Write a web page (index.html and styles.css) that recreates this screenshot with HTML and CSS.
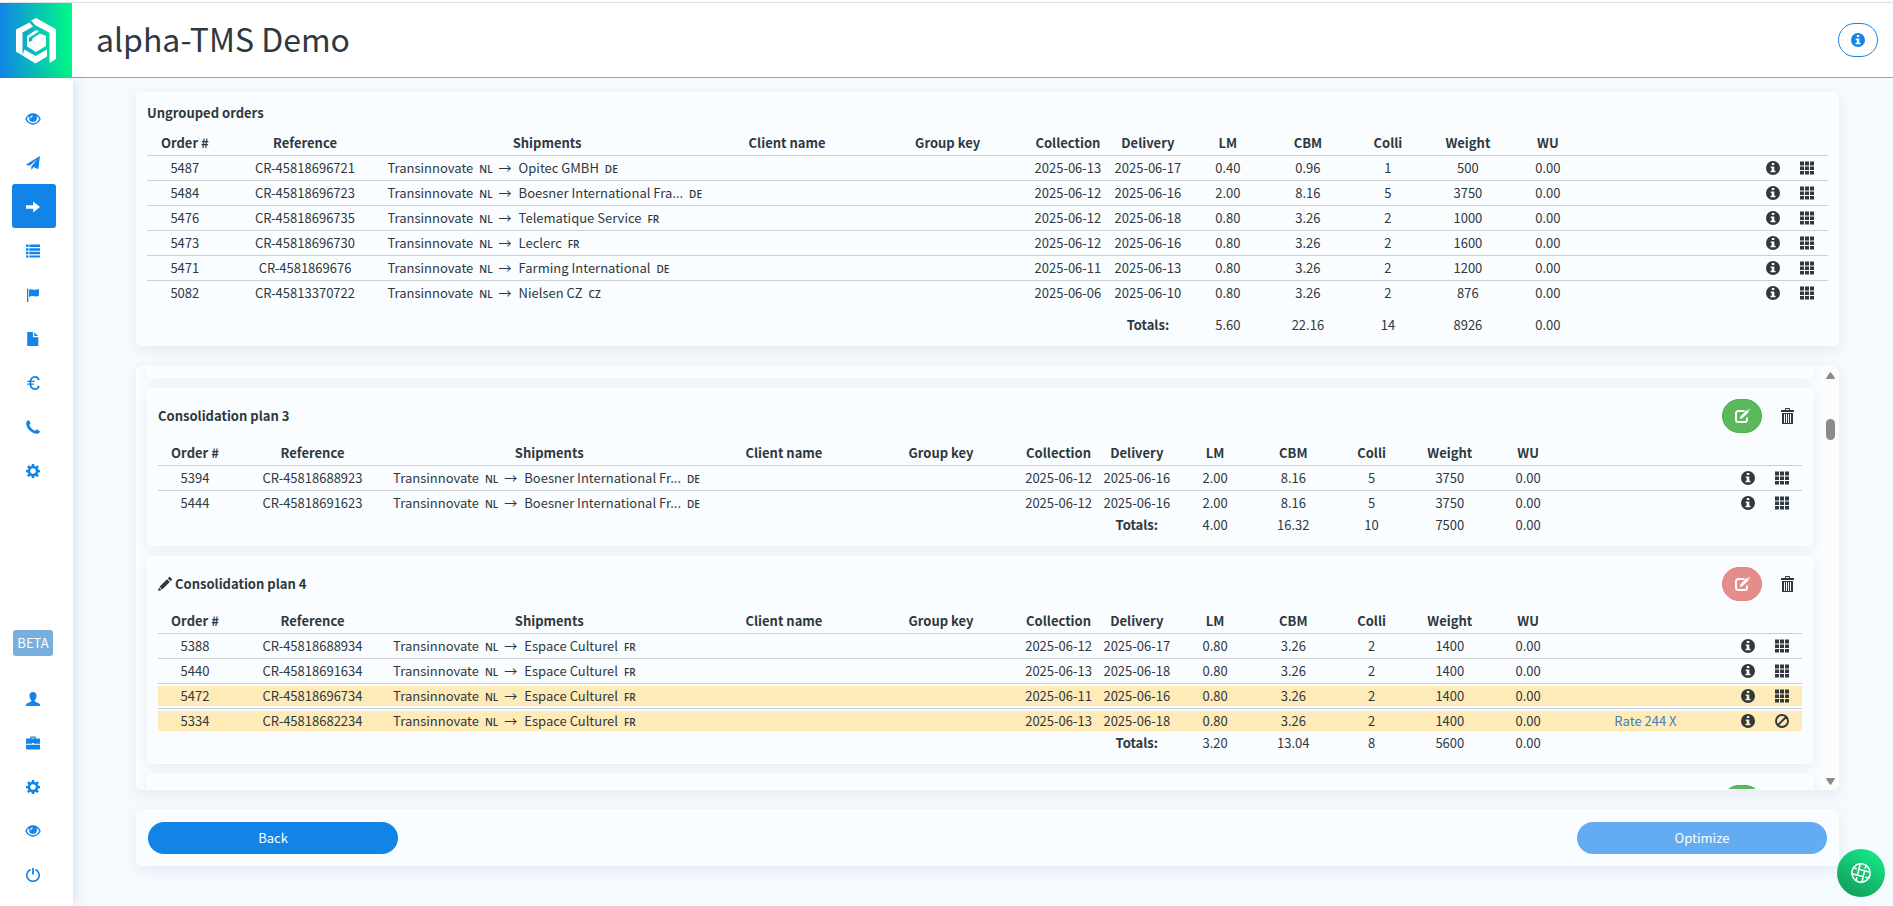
FILE: index.html
```html
<!DOCTYPE html>
<html lang="en">
<head>
<meta charset="utf-8">
<title>alpha-TMS Demo</title>
<link rel="stylesheet" href="styles.css">
</head>
<body>
<svg class="sprite" aria-hidden="true">
  <symbol id="eye" viewBox="0 0 16 14"><path fill="none" stroke="currentColor" stroke-width="1.500" d="M1 7C3 3.300 5.200 2 8 2s5 1.300 7 5c-2 3.700-4.200 5-7 5S3 10.700 1 7z"/><path fill-rule="evenodd" d="M8 2a3.900 3.900 0 1 0 0 7.800A3.900 3.900 0 0 0 8 2zM6.800 3.600c.9-.3 1 .3.800.8-.9.300-1.300 1-1.300 1.900-.6.300-1-.1-.9-.7.200-.9.700-1.600 1.400-2z"/></symbol>
  <symbol id="send" viewBox="0 0 14 14"><path d="M14 0L0 8.500l3.600 1.200L11.500 3 5.300 10.400V14l2.200-3 4.800 2.200z"/></symbol>
  <symbol id="arrow" viewBox="0 0 14 14"><path d="M0 5.200h7.200V1.400L14 7l-6.800 5.600V8.800H0z"/></symbol>
  <symbol id="list" viewBox="0 0 14 14"><path d="M0 .5h2.500v2.600H0zM3.300.5H14v2.600H3.300zM0 4.200h2.500v2.500H0zM3.300 4.200H14v2.500H3.300zM0 7.800h2.500v2.500H0zM3.300 7.800H14v2.500H3.300zM0 11.400h2.500v2.100H0zM3.300 11.400H14v2.100H3.300z"/></symbol>
  <symbol id="flag" viewBox="0 0 14 14"><path d="M1 .5h1.300V14H1zM3 2C5-.3 7 3.200 13 1v6.500C9.500 10 6.500 6.500 3 9z"/></symbol>
  <symbol id="file" viewBox="0 0 14 14"><path d="M1.200 0H7v5.300h5.300V14H1.200zM8.300.2l3.800 3.900H8.300z"/></symbol>
  <symbol id="euro" viewBox="0 0 14 14"><path fill="none" stroke="currentColor" stroke-width="1.800" d="M12.800 4.200C12.500 2 11 .9 9 .9 5.900.9 4.300 3.300 4.300 7s1.600 6.100 4.700 6.100c2 0 3.500-1.100 3.800-3.300"/><path d="M1.500 4.800H9L8.600 6H1zM1.500 7.500h6.800l-.4 1.200H1z"/></symbol>
  <symbol id="phone" viewBox="0 0 14 14"><path d="M.3 2.300L1.700.5c.4-.5 1-.5 1.400 0l1.300 2.400c.2.400.1.700-.2 1l-.9 1c.8 2.200 3.600 5 5.800 5.900l.9-1c.3-.3.6-.4 1-.2l2.500 1.400c.6.300.6.900.1 1.400L12 13.700C6.500 14.500-.8 7.800.3 2.300z"/></symbol>
  <symbol id="cog" viewBox="0 0 14 14"><path fill-rule="evenodd" d="M5.900 0h2.200l.4 2 1.200.5 1.700-1.200 1.500 1.500-1.200 1.700.5 1.200 1.800.3v2.200l-1.900.3-.5 1.200 1.200 1.700-1.500 1.500-1.700-1.200-1.100.5-.4 1.800H5.900l-.4-1.800-1.200-.5-1.700 1.200-1.500-1.500 1.200-1.700-.5-1.200L0 8.200V6l1.900-.3.5-1.200-1.200-1.700 1.500-1.500 1.700 1.200L5.500 2zM7 4.200a2.800 2.800 0 1 0 0 5.600 2.800 2.800 0 0 0 0-5.600z"/></symbol>
  <symbol id="user" viewBox="0 0 14 14"><path d="M7 0C4.800 0 3.500 1.300 3.500 3.500c0 2 .8 3.600 1.700 4.700.3.800-.1 1.400-1 1.800L.8 11.500c-.5.300-.8.900-.8 2.500h14c0-1.600-.3-2.200-.8-2.500L9.800 10c-.9-.4-1.300-1-1-1.800.9-1.100 1.700-2.700 1.700-4.700C10.500 1.300 9.200 0 7 0z"/></symbol>
  <symbol id="briefcase" viewBox="0 0 14 14"><path fill-rule="evenodd" d="M5 .5h4c.6 0 .9.400.9.900v1.100h3.300c.5 0 .8.300.8.800v4.400H8V7H6v.7H0V3.300c0-.5.300-.8.800-.8h3.300V1.400c0-.5.300-.9.900-.9zm.2 1.200v.8h3.600v-.8zM0 8.700h14v3.900c0 .6-.3.900-.8.900H.8c-.5 0-.8-.3-.8-.9z"/></symbol>
  <symbol id="power" viewBox="0 0 14 14"><path fill="none" stroke="currentColor" stroke-width="1.600" d="M4.600 1.500a6.200 6.200 0 1 0 4.800 0"/><path d="M6.100 0h1.800v6.500H6.100z"/></symbol>
  <symbol id="info" viewBox="0 0 14 14"><path fill-rule="evenodd" d="M7 0a7 7 0 1 0 0 14A7 7 0 0 0 7 0zM5.800 2h2.500v2H5.800zM4.700 5.400h3.600v4.300h1.200v1.500h-5V9.700h1.200V6.900h-1z"/></symbol>
  <symbol id="grid" viewBox="0 0 14 14"><path d="M0 .5h4v4H0zM5 .5h4v4H5zM10 .5h4v4h-4zM0 5.500h4v3.500H0zM5 5.500h4v3.500H5zM10 5.500h4v3.500h-4zM0 10h4v3.500H0zM5 10h4v3.500H5zM10 10h4v3.500h-4z"/></symbol>
  <symbol id="ban" viewBox="0 0 14 14"><path fill="none" stroke="currentColor" stroke-width="1.900" d="M7 1a6 6 0 1 0 0 12A6 6 0 0 0 7 1zM3 11l8-8"/></symbol>
  <symbol id="trash" viewBox="0 0 14 16"><path fill-rule="evenodd" d="M4 2V1c0-.6.400-1 1-1h3c.6 0 1 .4 1 1v1h3.500c.3 0 .5.200.5.500V4H0V2.500c0-.3.200-.5.500-.5zM5 1v1h3V1zM1 5h11v10.500c0 .3-.2.500-.5.500h-10c-.3 0-.5-.2-.5-.5zM3 6v9h1V6zM5 6v9h1V6zM7 6v9h1V6zM9 6v9h1V6z"/></symbol>
  <symbol id="edit" viewBox="0 0 16 14"><path fill="none" stroke="currentColor" stroke-width="2" d="M10.500 2H4.500C3 2 2 3 2 4.500v6C2 12 3 13 4.500 13h6c1.500 0 2.500-1 2.500-2.500V8.500"/><path d="M13 0.800l2 1.900-6.300 6.300-3 1.200 1-3.200zM14.200 0H16v1.800z"/></symbol>
  <symbol id="pencil" viewBox="0 0 14 14"><path d="M9 2.200L11.800 5 4.200 12.500 1.500 9.800zM9.800 1.400L11 .2c.4-.3.900-.3 1.200 0l1.600 1.600c.3.300.3.800 0 1.200l-1.200 1.200zM.9 10.500l2.600 2.600L0 14z"/></symbol>
</svg>

<header class="topbar">
  <a class="logo" href="#" aria-label="Home">
    <svg width="40" height="46" viewBox="0 0 40 46" fill="#fff"><path d="M0 11.500L13.500 4.500 17 8.500 6.500 14.500V36.800L0 33.800z"/><path d="M15 2.500L20 0l20 11.200V41l-6.500 4V14.800L19 7z"/><path d="M0 33.500l6.500 3.300L8.500 31.500l11 6.500L31 31.500v7L19.500 45.500z"/><path d="M11 18l9-6 3 1.500-10 6.300V24l3.500-1.500v-2.200l7.500-4.800 6 2.500v10L20 34l-9-5.500z"/></svg>
  </a>
  <h1 class="topbar-title">alpha-TMS Demo</h1>
  <button class="pill pill-outline" type="button" aria-label="Information"><svg class="ico"><use href="#info"/></svg></button>
</header>

<div class="shell">
  <nav class="sidebar" aria-label="Main">
    <div class="nav-group">
      <a class="nav-link" href="#" aria-label="Overview"><svg class="ico ico-wide"><use href="#eye"/></svg></a>
      <a class="nav-link" href="#" aria-label="Send"><svg class="ico"><use href="#send"/></svg></a>
      <a class="nav-link active" href="#" aria-label="Planning"><svg class="ico"><use href="#arrow"/></svg></a>
      <a class="nav-link" href="#" aria-label="Lists"><svg class="ico"><use href="#list"/></svg></a>
      <a class="nav-link" href="#" aria-label="Flags"><svg class="ico"><use href="#flag"/></svg></a>
      <a class="nav-link" href="#" aria-label="Documents"><svg class="ico"><use href="#file"/></svg></a>
      <a class="nav-link" href="#" aria-label="Finance"><svg class="ico"><use href="#euro"/></svg></a>
      <a class="nav-link" href="#" aria-label="Contact"><svg class="ico"><use href="#phone"/></svg></a>
      <a class="nav-link" href="#" aria-label="Settings"><svg class="ico"><use href="#cog"/></svg></a>
    </div>
    <div class="nav-group">
      <span class="beta">BETA</span>
      <a class="nav-link" href="#" aria-label="Profile"><svg class="ico"><use href="#user"/></svg></a>
      <a class="nav-link" href="#" aria-label="Company"><svg class="ico"><use href="#briefcase"/></svg></a>
      <a class="nav-link" href="#" aria-label="Preferences"><svg class="ico"><use href="#cog"/></svg></a>
      <a class="nav-link" href="#" aria-label="View"><svg class="ico ico-wide"><use href="#eye"/></svg></a>
      <a class="nav-link" href="#" aria-label="Log out"><svg class="ico"><use href="#power"/></svg></a>
    </div>
  </nav>

  <main class="content">
    <section class="card">
      <h2 class="card-title">Ungrouped orders</h2>
      <table class="orders spaced">
        <colgroup><col class="c-order"><col class="c-ref"><col class="c-ship"><col class="c-client"><col class="c-group"><col class="c1"><col class="c1"><col class="c1"><col class="c1"><col class="c1"><col class="c1"><col class="c1"><col class="c-rate"><col class="c1"></colgroup>
        <thead><tr><th>Order #</th><th>Reference</th><th>Shipments</th><th>Client name</th><th>Group key</th><th>Collection</th><th>Delivery</th><th>LM</th><th>CBM</th><th>Colli</th><th>Weight</th><th>WU</th><td></td><td></td></tr></thead>
        <tbody>
          <tr><td>5487</td><td>CR-45818696721</td><td class="ship">Transinnovate<small>NL</small>→<span class="dest">Opitec GMBH</span><small>DE</small></td><td></td><td></td><td>2025-06-13</td><td>2025-06-17</td><td>0.40</td><td>0.96</td><td>1</td><td>500</td><td>0.00</td><td></td><td><div class="acts"><button type="button" aria-label="Info"><svg class="ico"><use href="#info"/></svg></button><button type="button" aria-label="Move"><svg class="ico"><use href="#grid"/></svg></button></div></td></tr>
          <tr><td>5484</td><td>CR-45818696723</td><td class="ship">Transinnovate<small>NL</small>→<span class="dest">Boesner International Fra...</span><small>DE</small></td><td></td><td></td><td>2025-06-12</td><td>2025-06-16</td><td>2.00</td><td>8.16</td><td>5</td><td>3750</td><td>0.00</td><td></td><td><div class="acts"><button type="button" aria-label="Info"><svg class="ico"><use href="#info"/></svg></button><button type="button" aria-label="Move"><svg class="ico"><use href="#grid"/></svg></button></div></td></tr>
          <tr><td>5476</td><td>CR-45818696735</td><td class="ship">Transinnovate<small>NL</small>→<span class="dest">Telematique Service</span><small>FR</small></td><td></td><td></td><td>2025-06-12</td><td>2025-06-18</td><td>0.80</td><td>3.26</td><td>2</td><td>1000</td><td>0.00</td><td></td><td><div class="acts"><button type="button" aria-label="Info"><svg class="ico"><use href="#info"/></svg></button><button type="button" aria-label="Move"><svg class="ico"><use href="#grid"/></svg></button></div></td></tr>
          <tr><td>5473</td><td>CR-45818696730</td><td class="ship">Transinnovate<small>NL</small>→<span class="dest">Leclerc</span><small>FR</small></td><td></td><td></td><td>2025-06-12</td><td>2025-06-16</td><td>0.80</td><td>3.26</td><td>2</td><td>1600</td><td>0.00</td><td></td><td><div class="acts"><button type="button" aria-label="Info"><svg class="ico"><use href="#info"/></svg></button><button type="button" aria-label="Move"><svg class="ico"><use href="#grid"/></svg></button></div></td></tr>
          <tr><td>5471</td><td>CR-4581869676</td><td class="ship">Transinnovate<small>NL</small>→<span class="dest">Farming International</span><small>DE</small></td><td></td><td></td><td>2025-06-11</td><td>2025-06-13</td><td>0.80</td><td>3.26</td><td>2</td><td>1200</td><td>0.00</td><td></td><td><div class="acts"><button type="button" aria-label="Info"><svg class="ico"><use href="#info"/></svg></button><button type="button" aria-label="Move"><svg class="ico"><use href="#grid"/></svg></button></div></td></tr>
          <tr><td>5082</td><td>CR-45813370722</td><td class="ship">Transinnovate<small>NL</small>→<span class="dest">Nielsen CZ</span><small>CZ</small></td><td></td><td></td><td>2025-06-06</td><td>2025-06-10</td><td>0.80</td><td>3.26</td><td>2</td><td>876</td><td>0.00</td><td></td><td><div class="acts"><button type="button" aria-label="Info"><svg class="ico"><use href="#info"/></svg></button><button type="button" aria-label="Move"><svg class="ico"><use href="#grid"/></svg></button></div></td></tr>
        </tbody>
        <tfoot><tr><td colspan="6"></td><th>Totals:</th><td>5.60</td><td>22.16</td><td>14</td><td>8926</td><td>0.00</td><td></td><td></td></tr></tfoot>
      </table>
    </section>

    <section class="plans">
      <div class="plan-list">
        <div class="card card-tail"></div>
        <article class="card">
          <div class="plan-head">
            <h2 class="card-title">Consolidation plan 3</h2>
            <button class="pill pill-green" type="button" aria-label="Edit plan 3"><svg class="ico ico-wide"><use href="#edit"/></svg></button>
            <button class="trash" type="button" aria-label="Delete plan 3"><svg class="ico ico-tall"><use href="#trash"/></svg></button>
          </div>
          <table class="orders">
            <colgroup><col class="c-order"><col class="c-ref"><col class="c-ship"><col class="c-client"><col class="c-group"><col class="c1"><col class="c1"><col class="c1"><col class="c1"><col class="c1"><col class="c1"><col class="c1"><col class="c-rate"><col class="c1"></colgroup>
            <thead><tr><th>Order #</th><th>Reference</th><th>Shipments</th><th>Client name</th><th>Group key</th><th>Collection</th><th>Delivery</th><th>LM</th><th>CBM</th><th>Colli</th><th>Weight</th><th>WU</th><td></td><td></td></tr></thead>
            <tbody>
              <tr><td>5394</td><td>CR-45818688923</td><td class="ship">Transinnovate<small>NL</small>→<span class="dest">Boesner International Fr...</span><small>DE</small></td><td></td><td></td><td>2025-06-12</td><td>2025-06-16</td><td>2.00</td><td>8.16</td><td>5</td><td>3750</td><td>0.00</td><td></td><td><div class="acts"><button type="button" aria-label="Info"><svg class="ico"><use href="#info"/></svg></button><button type="button" aria-label="Move"><svg class="ico"><use href="#grid"/></svg></button></div></td></tr>
              <tr><td>5444</td><td>CR-45818691623</td><td class="ship">Transinnovate<small>NL</small>→<span class="dest">Boesner International Fr...</span><small>DE</small></td><td></td><td></td><td>2025-06-12</td><td>2025-06-16</td><td>2.00</td><td>8.16</td><td>5</td><td>3750</td><td>0.00</td><td></td><td><div class="acts"><button type="button" aria-label="Info"><svg class="ico"><use href="#info"/></svg></button><button type="button" aria-label="Move"><svg class="ico"><use href="#grid"/></svg></button></div></td></tr>
            </tbody>
            <tfoot><tr><td colspan="6"></td><th>Totals:</th><td>4.00</td><td>16.32</td><td>10</td><td>7500</td><td>0.00</td><td></td><td></td></tr></tfoot>
          </table>
        </article>
        <article class="card">
          <div class="plan-head">
            <h2 class="card-title"><svg class="ico" aria-hidden="true"><use href="#pencil"/></svg>Consolidation plan 4</h2>
            <button class="pill pill-red" type="button" aria-label="Edit plan 4"><svg class="ico ico-wide"><use href="#edit"/></svg></button>
            <button class="trash" type="button" aria-label="Delete plan 4"><svg class="ico ico-tall"><use href="#trash"/></svg></button>
          </div>
          <table class="orders">
            <colgroup><col class="c-order"><col class="c-ref"><col class="c-ship"><col class="c-client"><col class="c-group"><col class="c1"><col class="c1"><col class="c1"><col class="c1"><col class="c1"><col class="c1"><col class="c1"><col class="c-rate"><col class="c1"></colgroup>
            <thead><tr><th>Order #</th><th>Reference</th><th>Shipments</th><th>Client name</th><th>Group key</th><th>Collection</th><th>Delivery</th><th>LM</th><th>CBM</th><th>Colli</th><th>Weight</th><th>WU</th><td></td><td></td></tr></thead>
            <tbody>
              <tr><td>5388</td><td>CR-45818688934</td><td class="ship">Transinnovate<small>NL</small>→<span class="dest">Espace Culturel</span><small>FR</small></td><td></td><td></td><td>2025-06-12</td><td>2025-06-17</td><td>0.80</td><td>3.26</td><td>2</td><td>1400</td><td>0.00</td><td></td><td><div class="acts"><button type="button" aria-label="Info"><svg class="ico"><use href="#info"/></svg></button><button type="button" aria-label="Move"><svg class="ico"><use href="#grid"/></svg></button></div></td></tr>
              <tr><td>5440</td><td>CR-45818691634</td><td class="ship">Transinnovate<small>NL</small>→<span class="dest">Espace Culturel</span><small>FR</small></td><td></td><td></td><td>2025-06-13</td><td>2025-06-18</td><td>0.80</td><td>3.26</td><td>2</td><td>1400</td><td>0.00</td><td></td><td><div class="acts"><button type="button" aria-label="Info"><svg class="ico"><use href="#info"/></svg></button><button type="button" aria-label="Move"><svg class="ico"><use href="#grid"/></svg></button></div></td></tr>
              <tr class="marked"><td>5472</td><td>CR-45818696734</td><td class="ship">Transinnovate<small>NL</small>→<span class="dest">Espace Culturel</span><small>FR</small></td><td></td><td></td><td>2025-06-11</td><td>2025-06-16</td><td>0.80</td><td>3.26</td><td>2</td><td>1400</td><td>0.00</td><td></td><td><div class="acts"><button type="button" aria-label="Info"><svg class="ico"><use href="#info"/></svg></button><button type="button" aria-label="Move"><svg class="ico"><use href="#grid"/></svg></button></div></td></tr>
              <tr class="marked"><td>5334</td><td>CR-45818682234</td><td class="ship">Transinnovate<small>NL</small>→<span class="dest">Espace Culturel</span><small>FR</small></td><td></td><td></td><td>2025-06-13</td><td>2025-06-18</td><td>0.80</td><td>3.26</td><td>2</td><td>1400</td><td>0.00</td><td><a class="rate" href="#">Rate 244 X</a></td><td><div class="acts"><button type="button" aria-label="Info"><svg class="ico"><use href="#info"/></svg></button><button type="button" aria-label="Exclude"><svg class="ico"><use href="#ban"/></svg></button></div></td></tr>
            </tbody>
            <tfoot><tr><td colspan="6"></td><th>Totals:</th><td>3.20</td><td>13.04</td><td>8</td><td>5600</td><td>0.00</td><td></td><td></td></tr></tfoot>
          </table>
        </article>
        <article class="card">
          <div class="plan-head">
            <h2 class="card-title"></h2>
            <button class="pill pill-green" type="button" aria-label="Edit next plan"></button>
            <button class="trash" type="button" aria-label="Delete next plan"></button>
          </div>
        </article>
      </div>
      <div class="scrollbar" aria-hidden="true">
        <svg width="9" height="7"><path d="M4.500 0C5 0 9 6 9 6.500L8.500 7H.5L0 6.500C0 6 4 0 4.500 0z"/></svg>
        <div class="thumb"></div>
        <svg width="9" height="7"><path d="M4.500 7C5 7 9 1 9 .5L8.500 0H.5L0 .5C0 1 4 7 4.500 7z"/></svg>
      </div>
    </section>

    <footer class="card actions">
      <button class="btn" type="button">Back</button>
      <button class="btn btn-soft" type="button">Optimize</button>
    </footer>
  </main>
</div>

<button class="fab" type="button" aria-label="Help">
  <svg width="22" height="22" viewBox="0 0 22 22" fill="none" stroke="#fff" stroke-width="1.500"><g transform="rotate(14 11 11)"><path d="M11 1.800c3 0 4.500.8 6.200 2.500S20.200 8 20.200 11s-1.200 5-3 6.700-3.200 2.500-6.200 2.500-4.700-1-6.300-2.600S1.800 14 1.800 11s1.200-5 2.900-6.700S8 1.800 11 1.800z"/><path d="M8 2.200V14M14 8v11.800M2.200 14H14M8 8h11.800M14 2.500V6M8 16v3.500M2.500 8H6M16 14h3.500"/></g></svg>
</button>
</body>
</html>
```

FILE: styles.css
```css
* { box-sizing: border-box; }

body {
  margin: 0;
  height: 100vh;
  display: flex;
  flex-direction: column;
  overflow: hidden;
  background: #f5faff;
  color: #2f383e;
  font: 13px/20px "Noto Sans CJK SC", "Noto Sans", sans-serif;
}

button { font: inherit; color: inherit; padding: 0; border: 0; background: none; cursor: pointer; }
h1, h2 { margin: 0; }
.sprite { display: none; }
.ico { display: block; width: 14px; height: 14px; fill: currentColor; flex: none; }
.ico-wide { width: 16px; }
.ico-tall { height: 16px; }

.topbar {
  display: flex;
  align-items: center;
  flex: none;
  height: 76px;
  margin-top: 2px;
  padding-right: 15px;
  border-top: 1px solid #dee1e3;
  border-bottom: 1px solid #2fdf92;
  background: #fff;
  box-shadow: 0 -2px #fff;
}
.logo {
  display: flex;
  align-items: center;
  justify-content: center;
  align-self: stretch;
  width: 72px;
  margin-bottom: -1px;
  background: linear-gradient(90deg, #1284e8, #00f58a 95%);
}
.topbar-title { flex: 1; padding: 0 0 4px 24px; font-size: 32px; font-weight: 400; line-height: 40px; }

.pill {
  display: flex;
  align-items: center;
  justify-content: center;
  width: 40px;
  height: 34px;
  border: 1px solid;
  border-radius: 17px;
}
.pill-outline { color: #1284e8; border-color: #1284e8; background: #fff; }
.pill-green { color: #fff; background: #5cb85c; border-color: #4cae4c; }
.pill-red { color: #fff; background: #e48e8b; border-color: #e08583; }

.shell { display: flex; flex: 1; min-height: 0; }
.sidebar {
  display: flex;
  flex-direction: column;
  justify-content: space-between;
  flex: none;
  width: 73px;
  padding: 18px 0 10px 12px;
  background: #fff;
  box-shadow: 2px 0 12px rgba(60, 80, 100, .16);
}
.nav-group { display: flex; flex-direction: column; align-items: flex-start; }
.nav-link {
  display: flex;
  align-items: center;
  justify-content: center;
  width: 44px;
  height: 44px;
  padding: 2px 2px 0 0;
  border-radius: 3px;
  color: #1284e8;
}
.nav-link.active { background: #1284e8; color: #fff; }
.beta {
  width: 40px;
  margin: 0 0 20px 1px;
  border-radius: 3px;
  background: #78afdc;
  color: #fff;
  font-size: 13px;
  line-height: 26px;
  text-align: center;
}

.content {
  display: flex;
  flex-direction: column;
  flex: 1;
  min-width: 0;
  gap: 20px;
  padding: 14px 54px 40px 63px;
}
.card, .plans {
  flex: none;
  border: 1px solid #fff;
  border-radius: 6px;
  background: #fafdff;
  box-shadow: 0 4px 14px rgba(60, 80, 100, .09);
}
.card { padding: 10px; }
.card > .card-title { margin-bottom: 8px; }
.card-title { display: flex; align-items: center; gap: 3px; font-size: 13px; line-height: 20px; font-weight: 700; }

.orders { width: 100%; table-layout: fixed; border-collapse: separate; border-spacing: 0; }
.c1 { width: 4.76%; }
.c-order { width: 4.5%; }
.c-ref { width: 9.8%; }
.c-ship { width: 19%; }
.c-client { width: 9.55%; }
.c-group { width: 9.55%; }
.c-rate { width: 9.52%; }
.orders th, .orders td {
  height: 25px;
  padding: 2px 0;
  border-bottom: 1px solid #cdd1d4;
  text-align: center;
  white-space: nowrap;
}
.orders tbody tr:last-child td { height: 24px; border-bottom: 0; }
.orders tfoot th, .orders tfoot td { height: 20px; padding: 0; border: 0; }
.orders.spaced tfoot th, .orders.spaced tfoot td { height: 30px; padding-top: 10px; }
.orders .ship { text-align: left; }
.ship small { margin: 0 6px; font: 600 10px/10px "Open Sans", sans-serif; }
.ship .dest { margin-left: 7px; }
.orders .marked td { background: #ffebb8 content-box; }
.rate { color: #4480b8; text-decoration: none; }
.acts { display: flex; align-items: center; justify-content: center; gap: 20px; height: 20px; padding: 0 0 0 4px; }

.plans { display: flex; flex: 1; min-height: 0; overflow: hidden; }
.plan-list {
  display: flex;
  flex-direction: column;
  flex: 1;
  gap: 10px;
  min-width: 0;
  padding: 0 10px;
  overflow: hidden;
}
.card-tail { height: 11px; padding: 0; border-top: 0; border-radius: 0 0 6px 6px; }
.plan-head { display: flex; align-items: center; height: 34px; margin-bottom: 8px; }
.plan-head .card-title { flex: 1; }
.trash { display: flex; justify-content: center; width: 14px; margin: 0 7px 0 19px; }

.scrollbar {
  display: flex;
  flex-direction: column;
  align-items: center;
  flex: none;
  width: 15px;
  padding: 5px 0 4px;
  background: #fcfcfc;
  fill: #8b8b8b;
}
.thumb { width: 9px; height: 21px; margin: 40px 0 auto; border-radius: 5px; background: #8b8b8b; }

.actions { display: flex; justify-content: space-between; padding: 11px; }
.btn { width: 250px; height: 32px; border-radius: 16px; background: #1284e8; color: #fff; }
.btn-soft { background: #63acf1; }

.fab {
  position: fixed;
  right: 8px;
  bottom: 9px;
  display: flex;
  align-items: center;
  justify-content: center;
  width: 48px;
  height: 48px;
  border-radius: 50%;
  background: linear-gradient(30deg, #129455, #17f08c);
}
```
